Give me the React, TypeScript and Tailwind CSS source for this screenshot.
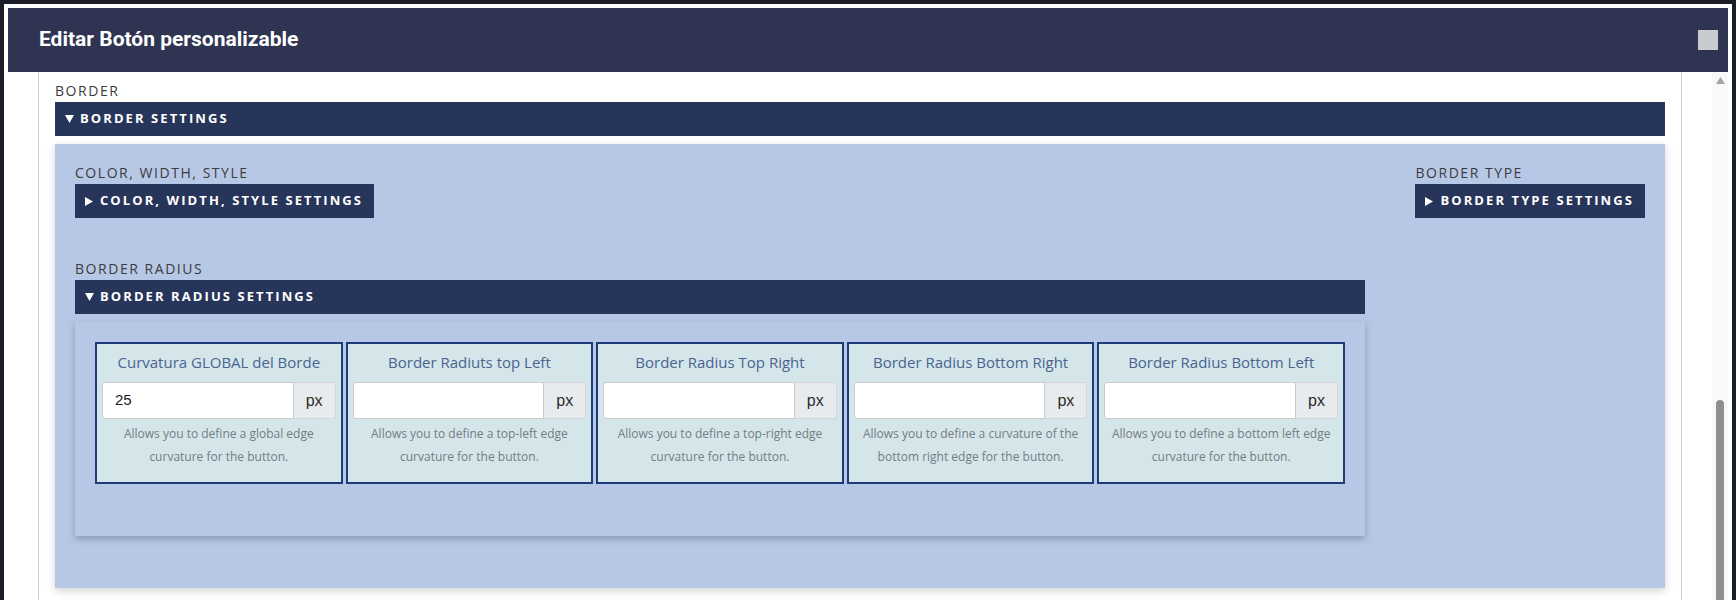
const cards = [
  {
    title: "Curvatura GLOBAL del Borde",
    value: "25",
    help: "Allows you to define a global edge curvature for the button.",
  },
  {
    title: "Border Radiuts top Left",
    value: "",
    help: "Allows you to define a top-left edge curvature for the button.",
  },
  {
    title: "Border Radius Top Right",
    value: "",
    help: "Allows you to define a top-right edge curvature for the button.",
  },
  {
    title: "Border Radius Bottom Right",
    value: "",
    help: "Allows you to define a curvature of the bottom right edge for the button.",
  },
  {
    title: "Border Radius Bottom Left",
    value: "",
    help: "Allows you to define a bottom left edge curvature for the button.",
  },
];

const plex = { fontFamily: '"Open Sans", "Noto Sans", sans-serif' };

const SectionLabel = ({ text }: { text: string }) => (
  <div className="text-[14px] leading-[18px] tracking-[0.11em] uppercase text-[#3b3b3b] mb-[2px]">
    {text}
  </div>
);

const ToggleBar = ({ text, open }: { text: string; open?: boolean }) => (
  <div className="h-[34px] flex items-center pl-[10px] pr-[11px] bg-[#28355a] text-white text-[13px] font-bold tracking-[0.16em] uppercase">
    {open ? (
      <svg width="9" height="8" viewBox="0 0 9 8" className="mr-[6px] shrink-0">
        <path d="M0 0 L9 0 L4.5 8 Z" fill="#fff" />
      </svg>
    ) : (
      <svg width="8" height="9" viewBox="0 0 8 9" className="mr-[7px] shrink-0">
        <path d="M0 0 L8 4.5 L0 9 Z" fill="#fff" />
      </svg>
    )}
    <span>{text}</span>
  </div>
);

const RadiusCard = ({ title, value, help }: { title: string; value: string; help: string }) => (
  <div className="border-2 border-[#1d3b7b] bg-[#d4e6ea] px-[5px] pt-[6px] pb-[14px] flex flex-col">
    <div className="text-center text-[15px] leading-[24px] text-[#4a6390]">{title}</div>
    <div className="flex mt-[8px] h-[37px]">
      <div
        className="flex-1 bg-white border border-[#cbcbcb] rounded-l-[3px] flex items-center pl-[12px] text-[15px] text-[#1a1a1a]"
        style={{ fontFamily: '"Liberation Sans", Arial, sans-serif' }}
      >
        {value}
      </div>
      <div
        className="w-[42px] bg-[#e8ebee] border border-l-0 border-[#d3d6da] rounded-r-[3px] flex items-center justify-center text-[16px] text-[#2b2b2b]"
        style={{ fontFamily: '"Liberation Sans", Arial, sans-serif' }}
      >
        px
      </div>
    </div>
    <div className="mt-[3px] px-[6px] text-center text-[12px] leading-[23px] text-[#737d83]">{help}</div>
  </div>
);

export default function App() {
  return (
    <div className="w-[1736px] h-[600px] overflow-hidden bg-[#1b1e29] pt-[4px] pl-[4px] pr-[4px]" style={plex}>
      <div className="bg-white h-[700px] p-[4px] flex flex-col">
        {/* header */}
        <div className="h-[64px] shrink-0 bg-[#2e3452] flex items-center justify-between pl-[31px] pr-[10px]">
          <h1
            className="text-white text-[21px] font-bold"
            style={{ fontFamily: 'Roboto, "Liberation Sans", sans-serif' }}
          >
            Editar Botón personalizable
          </h1>
          <div className="w-[20px] h-[20px] bg-[#c9cad0]" />
        </div>

        {/* body */}
        <div className="flex flex-1">
          <div className="flex-1 pl-[30px] pr-[30px]">
            <div className="border-l border-r border-[#cfcfcf] h-full px-[16px] pt-[10px]">
              <SectionLabel text="Border" />
              <ToggleBar text="Border settings" open />

              <div className="mt-[8px] bg-[#b7c8e6] shadow-[0_3px_8px_rgba(0,0,0,0.18)] pt-[20px] px-[20px] pb-[52px] flex justify-between">
                <div className="w-[1290px]">
                  <SectionLabel text="Color, width, style" />
                  <div className="inline-block">
                    <ToggleBar text="Color, width, style settings" />
                  </div>

                  <div className="mt-[42px]">
                    <SectionLabel text="Border radius" />
                    <ToggleBar text="Border radius settings" open />
                    <div className="mt-[8px] bg-[#b7c8e6] shadow-[0_3px_7px_rgba(0,0,0,0.25)] pt-[20px] px-[20px] pb-[52px]">
                      <div className="grid grid-cols-5 gap-[3px]">
                        {cards.map((c) => (
                          <RadiusCard key={c.title} {...c} />
                        ))}
                      </div>
                    </div>
                  </div>
                </div>

                <div className="shrink-0">
                  <SectionLabel text="Border type" />
                  <ToggleBar text="Border type settings" />
                </div>
              </div>
            </div>
          </div>

          {/* scrollbar */}
          <div className="w-[16px] bg-[#f9f9f9] flex flex-col items-center pt-[5px]">
            <svg width="9" height="7" viewBox="0 0 9 7">
              <path d="M4.5 0 L9 7 L0 7 Z" fill="#a3a3a3" />
            </svg>
            <div className="mt-[316px] w-[8px] h-[260px] rounded-full bg-[#8f8f8f]" />
          </div>
        </div>
      </div>
    </div>
  );
}
